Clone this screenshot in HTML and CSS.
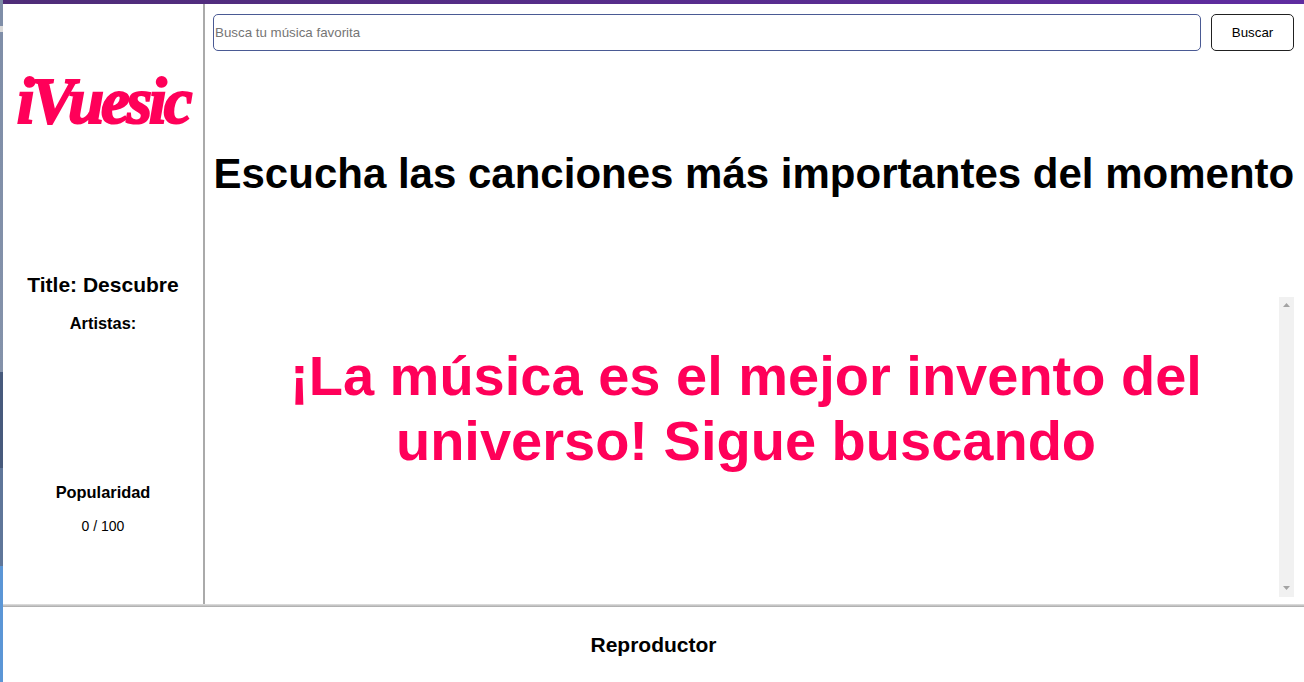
FILE: index.html
```html
<!DOCTYPE html>
<html lang="es">
<head>
<meta charset="utf-8">
<title>iVuesic</title>
<link rel="stylesheet" href="styles.css">
</head>
<body>
<div class="desktop-edge"></div>
<div class="app">
  <div class="topbar"></div>
  <div class="main">
    <aside class="sidebar">
      <div class="logo-wrap"><span class="logo">iVuesic</span></div>
      <h2 class="track-title">Title: Descubre</h2>
      <h3 class="label artists">Artistas:</h3>
      <h3 class="label popularity">Popularidad</h3>
      <p class="score">0 / 100</p>
    </aside>
    <main class="content">
      <form class="search">
        <input class="search-input" type="text" placeholder="Busca tu música favorita">
        <button class="search-btn" type="button">Buscar</button>
      </form>
      <h1 class="headline">Escucha las canciones más importantes del momento</h1>
      <div class="results">
        <h2 class="message">¡La música es el mejor invento del universo! Sigue buscando</h2>
        <div class="scrollbar">
          <svg class="arrow" width="7" height="4" viewBox="0 0 7 4"><path d="M3.5 0L7 4H0z"/></svg>
          <svg class="arrow" width="7" height="4" viewBox="0 0 7 4"><path d="M0 0H7L3.5 4z"/></svg>
        </div>
      </div>
    </main>
  </div>
  <footer class="player"><h2 class="player-title">Reproductor</h2></footer>
</div>
</body>
</html>
```
FILE: styles.css
```css
* { box-sizing: border-box; }
html, body { margin: 0; height: 100%; overflow: hidden; }
body { display: flex; font-family: "Liberation Sans", Arial, sans-serif; color: #000; background: #fff; }
.desktop-edge {
  width: 3px; flex: none;
  background: linear-gradient(to bottom, #7f8ea8 0, #7f8ea8 26px, #d9d9d9 26px, #d9d9d9 32px, #7f8ea8 32px, #8492aa 372px, #475a7c 372px, #475a7c 468px, #5f7699 468px, #5f7699 566px, #5b96d6 566px, #5b96d6 100%);
}
.app { flex: 1; min-width: 0; display: flex; flex-direction: column; }
.topbar { height: 4px; flex: none; background: linear-gradient(to right, #4f2d78, #5f2ca0); }
.main { height: 600px; flex: none; display: flex; }
.sidebar {
  width: 202px; flex: none; border-right: 2px solid #aaa;
  display: flex; flex-direction: column; align-items: center; text-align: center;
}
.logo-wrap { height: 259px; padding-top: 65px; flex: none; }
.logo {
  display: block; font-family: "Liberation Serif", serif; font-style: italic; font-weight: 700;
  font-size: 65px; line-height: 65px; letter-spacing: -3.2px; color: #ff0059;
  -webkit-text-stroke: 2px #ff0059;
}
.track-title { margin: 0; font-size: 21px; line-height: 44px; font-weight: 700; height: 44px; }
.label { margin: 0; font-size: 16.4px; line-height: 18px; font-weight: 700; }
.artists { margin-top: 7px; }
.popularity { margin-top: 151px; }
.score { margin: 17px 0 0; font-size: 14px; line-height: 16px; }
.content { flex: 1; min-width: 0; padding: 10px 10px 7px 8px; display: flex; flex-direction: column; }
.search { display: flex; gap: 10px; height: 37px; flex: none; }
.search-input {
  flex: 1; min-width: 0; height: 37px; border: 1px solid #4a5a94; border-radius: 5px; padding: 0 1px;
  font: 13.33px "Liberation Sans", Arial, sans-serif;
}
.search-input::placeholder { color: #757575; opacity: 1; }
.search-btn {
  width: 83px; height: 37px; border: 1px solid #212121; border-radius: 5px; background: #fff;
  font: 13.33px "Liberation Sans", Arial, sans-serif; color: #000; padding: 0;
}
.headline { margin: 100px 0 0 0.5px; height: 46px; font-size: 42px; line-height: 46px; font-weight: 700; white-space: nowrap; flex: none; }
.results { flex: 1; min-height: 0; margin-top: 100px; display: flex; }
.message {
  flex: 1; min-width: 0; margin: 46px 0 0; color: #ff0059; text-align: center;
  font-size: 56px; line-height: 65px; font-weight: 700; padding: 0 25px;
}
.scrollbar {
  width: 15px; flex: none; background: #f1f1f1; display: flex; flex-direction: column; justify-content: space-between;
  align-items: center; padding: 6px 0 7px;
}
.arrow { fill: #a3a3a3; display: block; }
.player { flex: 1; background: linear-gradient(to bottom, #e2e2e2 0, #a8a8a8 3px, #fff 3px) no-repeat; text-align: center; padding-top: 29px; }
.player-title { margin: 0; font-size: 21px; line-height: 24px; font-weight: 700; }
```
